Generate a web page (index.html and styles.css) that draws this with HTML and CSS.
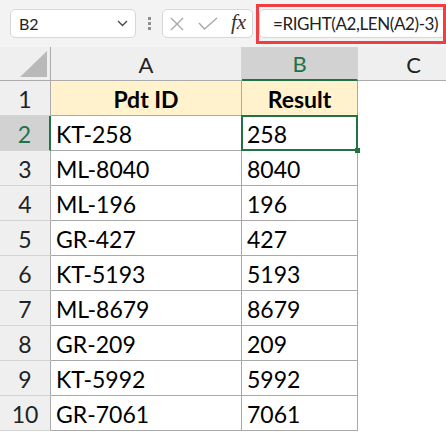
FILE: index.html
```html
<!DOCTYPE html>
<html lang="en">
<head>
  <meta charset="UTF-8" />
  <title>RIGHT formula</title>
  <link rel="stylesheet" href="styles.css">
</head>
<body>
  <!-- Formula bar -->
  <div class="toolbar">
    <div class="namebox">
      <span>B2</span>
      <svg width="11" height="7" viewBox="0 0 11 7"><polyline points="1,1 5.5,5.5 10,1" fill="none" stroke="#444" stroke-width="1.3"/></svg>
    </div>
    <div class="grip"><i></i><i></i><i></i></div>
    <div class="fxbox">
      <svg class="icon-x" width="14" height="14" viewBox="0 0 14 14"><path d="M1 1L13 13M13 1L1 13" stroke="#a6a6a6" stroke-width="1.3"/></svg>
      <svg class="icon-check" width="20" height="13" viewBox="0 0 20 13"><polyline points="1,6 6.5,12 19,1" fill="none" stroke="#a6a6a6" stroke-width="1.3"/></svg>
      <span class="fx">fx</span>
    </div>
    <div class="formula">=RIGHT(A2,LEN(A2)-3)</div>
    <div class="highlight"></div>
  </div>

  <!-- Sheet -->
  <div class="sheet">
    <div class="cell ch corner"><span class="tri"></span></div>
    <div class="cell ch">A</div>
    <div class="cell ch active-col">B</div>
    <div class="cell ch col-c">C</div>

    <div class="cell rh">1</div>
    <div class="cell head">Pdt ID</div>
    <div class="cell head">Result</div>
    <div class="cell blank"></div>

    <div class="cell rh active-row">2</div>
    <div class="cell">KT-258</div>
    <div class="cell selected">258</div>
    <div class="cell blank"></div>

    <div class="cell rh">3</div>
    <div class="cell">ML-8040</div>
    <div class="cell">8040</div>
    <div class="cell blank"></div>

    <div class="cell rh">4</div>
    <div class="cell">ML-196</div>
    <div class="cell">196</div>
    <div class="cell blank"></div>

    <div class="cell rh">5</div>
    <div class="cell">GR-427</div>
    <div class="cell">427</div>
    <div class="cell blank"></div>

    <div class="cell rh">6</div>
    <div class="cell">KT-5193</div>
    <div class="cell">5193</div>
    <div class="cell blank"></div>

    <div class="cell rh">7</div>
    <div class="cell">ML-8679</div>
    <div class="cell">8679</div>
    <div class="cell blank"></div>

    <div class="cell rh">8</div>
    <div class="cell">GR-209</div>
    <div class="cell">209</div>
    <div class="cell blank"></div>

    <div class="cell rh">9</div>
    <div class="cell">KT-5992</div>
    <div class="cell">5992</div>
    <div class="cell blank"></div>

    <div class="cell rh">10</div>
    <div class="cell">GR-7061</div>
    <div class="cell">7061</div>
    <div class="cell blank"></div>
  </div>
</body>
</html>
```

FILE: styles.css
```css
html, body {
  margin: 0;
  padding: 0;
  overflow: hidden;
}
body {
  background-color: #fff;
  font-family: Lato, "Liberation Sans", sans-serif;
  color: #000;
}

/* formula bar */
.toolbar {
  position: relative;
  height: 47px;
  background-color: #f3f3f3;
  display: flex;
  align-items: center;
  padding-left: 10px;
  box-sizing: border-box;
}
.namebox {
  width: 126px;
  height: 29px;
  flex-shrink: 0;
  box-sizing: border-box;
  background-color: #fff;
  border: 1px solid #d6d6d6;
  border-radius: 5px;
  display: flex;
  align-items: center;
  justify-content: space-between;
  padding: 0 7px 0 8px;
  font-size: 16px;
  color: #222;
}
.grip {
  display: flex;
  flex-direction: column;
  gap: 2px;
  margin-left: 12px;
}
.grip i {
  display: block;
  width: 3px;
  height: 3px;
  background-color: #8f8f8f;
}
.fxbox {
  width: 91px;
  height: 29px;
  flex-shrink: 0;
  margin-left: 11px;
  box-sizing: border-box;
  background-color: #fff;
  border: 1px solid #d6d6d6;
  border-radius: 5px;
  display: flex;
  align-items: center;
  padding-left: 7px;
}
.icon-check {
  margin-left: 14px;
}
.fx {
  margin-left: 13px;
  font-family: "Liberation Serif", serif;
  font-style: italic;
  font-size: 21px;
  color: #333;
  line-height: 1;
  margin-top: -3px;
}
.formula {
  flex: 1;
  height: 29px;
  margin-left: 6px;
  box-sizing: border-box;
  background-color: #fff;
  border: 1px solid #d6d6d6;
  border-radius: 5px;
  padding-left: 13px;
  display: flex;
  align-items: center;
  font-size: 17px;
  letter-spacing: -0.4px;
  color: #222;
  white-space: nowrap;
  overflow: hidden;
}
.highlight {
  position: absolute;
  left: 256px;
  top: 4px;
  width: 190px;
  height: 40px;
  border: 3px solid #ee3f42;
  box-sizing: border-box;
}

/* grid */
.sheet {
  display: grid;
  grid-template-columns: 51px 191px 116px 88px;
  grid-template-rows: 34px;
  grid-auto-rows: 35px;
}
.cell {
  box-sizing: border-box;
  border-right: 1px solid #a9a9a9;
  border-bottom: 1px solid #a9a9a9;
  display: flex;
  align-items: flex-end;
  padding: 0 5px 2px 5px;
  font-size: 23px;
  white-space: nowrap;
}
.ch {
  background-color: #efefef;
  justify-content: center;
  border-right-color: #d4d4d4;
  border-bottom-color: #ababab;
  font-size: 22px;
  color: #222;
}
.col-c {
  padding-left: 28px;
  border-right: none;
}
.corner {
  position: relative;
  border-right-color: #ababab;
}
.tri {
  position: absolute;
  right: 3px;
  bottom: 3px;
  width: 0;
  height: 0;
  border-left: 27px solid transparent;
  border-bottom: 26px solid #b9b9b9;
}
.rh {
  background-color: #efefef;
  justify-content: center;
  border-bottom-color: #d4d4d4;
  border-right-color: #ababab;
  color: #222;
}
.head {
  background-color: #fff2cc;
  justify-content: center;
  font-weight: bold;
}
.blank {
  border: none;
}
.active-col {
  background-color: #d2d2d2;
  color: #217346;
  border-bottom: 2px solid #217346;
}
.active-row {
  background-color: #d2d2d2;
  color: #217346;
  border-right: 2px solid #217346;
}
.selected {
  position: relative;
}
.selected::before {
  content: '';
  position: absolute;
  top: -1px;
  left: -1px;
  right: -1px;
  bottom: -1px;
  border: 2px solid #217346;
}
.selected::after {
  content: '';
  position: absolute;
  right: -3px;
  bottom: -3px;
  width: 5px;
  height: 5px;
  background-color: #217346;
}
```
